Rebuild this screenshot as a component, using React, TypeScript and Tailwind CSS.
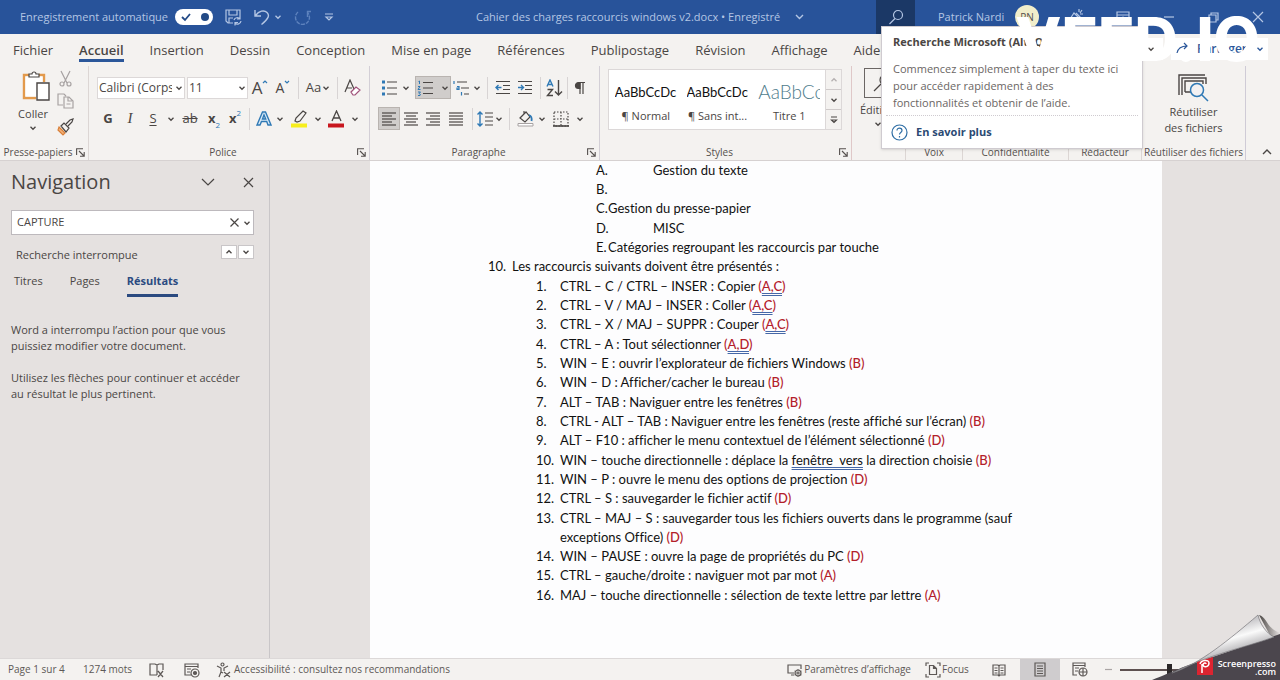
import React from "react";

type IconProps = { children: React.ReactNode; w?: number; h?: number; c?: string };

function Svg({ children, w = 16, h = 16, c = "" }: IconProps) {
  return (
    <svg width={w} height={h} viewBox={`0 0 ${w} ${h}`} fill="none" stroke="currentColor" strokeWidth="1.2" className={`shrink-0 ${c}`} aria-hidden="true">
      {children}
    </svg>
  );
}

function Chevron({ c = "" }: { c?: string }) {
  return (
    <Svg w={8} h={8} c={c}>
      <path d="M1.5 2.8 4 5.3 6.5 2.8" strokeWidth="1.3" />
    </Svg>
  );
}

function Tool({ label, w, children, on = false }: { label: string; w: string; children: React.ReactNode; on?: boolean }) {
  return (
    <button
      type="button"
      aria-label={label}
      className={`flex h-[23px] shrink-0 items-center justify-center ${w} ${on ? "border border-[#b9b4b0] bg-[#d0cdcb]" : ""}`}
    >
      {children}
    </button>
  );
}

function More({ label }: { label: string }) {
  return (
    <Tool label={label} w="w-3">
      <Chevron />
    </Tool>
  );
}

function Sep() {
  return <span className="mx-1 h-[22px] w-px shrink-0 bg-[#d8d4d4]" />;
}

function Launcher() {
  return (
    <button type="button" aria-label="Options du groupe" className="flex">
      <Svg w={9} h={9}>
        <path d="M.6 7V.8H7M3 3l5 5M8.2 4v4.2H4" strokeWidth="1.1" />
      </Svg>
    </button>
  );
}

function GroupLabel({ children, launcher = false }: { children: React.ReactNode; launcher?: boolean }) {
  return (
    <div className={`mt-auto flex h-4 items-center text-[10px] leading-4 text-[#55504e] ${launcher ? "-ml-2 pr-[3px]" : ""}`}>
      <span className="flex-1 text-center whitespace-nowrap">{children}</span>
      {launcher && <Launcher />}
    </div>
  );
}

function Lines({ rows }: { rows: [number, number][] }) {
  return (
    <Svg>
      {rows.map(([a, b], i) => (
        <path key={i} d={`M${a} ${2 + i * 3}H${b}`} />
      ))}
    </Svg>
  );
}

function TitleBar() {
  return (
    <header className="flex h-[34px] shrink-0 items-center bg-[#28539a] text-[11px] text-[#b4c6e4]">
      <div className="flex w-[476px] shrink-0 items-center pl-5">
        <label htmlFor="autosave" className="w-[155px] whitespace-nowrap">Enregistrement automatique</label>
        <span className="relative flex h-4 w-[38px] items-center justify-between rounded-full bg-white px-1 text-[#234a86]">
          <input id="autosave" type="checkbox" role="switch" defaultChecked className="absolute inset-0 opacity-0" />
          <Svg w={14} h={12}><path d="m3 6 3 3 5-6" strokeWidth="1.8" /></Svg>
          <span className="size-2 rounded-full bg-[#234a86]" />
        </span>
        <button type="button" aria-label="Enregistrer" className="ml-3">
          <Svg w={17} h={18}>
            <path d="M8 15H3L1 13V2h14v6M4 2v5h8V2M4 15v-5h4M9 12a3.5 3.5 0 0 1 6-1M15 8v3h-3M16 13a3.5 3.5 0 0 1-6 2M10 17.5v-3h3" />
          </Svg>
        </button>
        <button type="button" aria-label="Annuler" className="ml-3">
          <Svg w={16} h={18}><path d="M1 2v6h6M1.500 7.500C5 3 10 1.500 13 4.500s1.500 6-5.500 12" strokeWidth="1.4" /></Svg>
        </button>
        <Chevron c="ml-1" />
        <button type="button" aria-label="Rétablir" className="ml-3 text-[#5d82bd]">
          <Svg w={18} h={18}><path d="M4 4a7 7 0 1 0 9 0M13.500 9V3.500H18" strokeWidth="1.400" strokeDasharray="4 1" /></Svg>
        </button>
        <button type="button" aria-label="Personnaliser la barre" className="ml-3">
          <Svg w={10} h={10}><path d="M1 2h8M2 5l3 3 3-3z" /></Svg>
        </button>
      </div>
      <div className="flex w-[400px] shrink-0 items-center whitespace-nowrap">
        <button type="button" className="flex items-center">
          <span className="w-[318px] text-left">Cahier des charges raccourcis windows v2.docx • Enregistré</span>
          <Svg w={11} h={8}><path d="m2 2 3.500 3.500L9 2" strokeWidth="1.400" /></Svg>
        </button>
      </div>
      <button type="button" aria-label="Rechercher" className="flex h-[34px] w-[39px] shrink-0 items-center justify-center bg-[#1b3866]">
        <Svg><circle cx="10" cy="6" r="4.500" /><path d="M7 9.500 1.500 15" /></Svg>
      </button>
      <span className="ml-[23px] w-[77px] shrink-0 whitespace-nowrap">Patrick Nardi</span>
      <span className="flex size-6 shrink-0 items-center justify-center rounded-full bg-[#f1eecb] text-[10px] text-[#55504e]">PN</span>
      <div className="flex flex-1 items-center justify-between pr-4 pl-7">
        <button type="button" aria-label="Nouveautés"><Svg w={16} h={18}><path d="m1 14 6-9 5 5-9 5zM9 5l5 5M12 1v3M15 2l-2 3M16 6h-3" /></Svg></button>
        <button type="button" aria-label="Affichage du ruban"><Svg w={14} h={14}><path d="M1 2h12v10H1zM1 5h12M7 11V7M5 9l2-2 2 2" /></Svg></button>
        <button type="button" aria-label="Réduire"><Svg w={12} h={12}><path d="M1 6h10" /></Svg></button>
        <button type="button" aria-label="Restaurer"><Svg w={11} h={11}><path d="M1 3h7v7H1zM3 3V1h7v7H8" /></Svg></button>
        <button type="button" aria-label="Fermer"><Svg w={12} h={12}><path d="m1 1 10 10M11 1 1 11" /></Svg></button>
      </div>
    </header>
  );
}

const tabs = ["Fichier", "Accueil", "Insertion", "Dessin", "Conception", "Mise en page", "Références", "Publipostage", "Révision", "Affichage", "Aide"];

function Tabs() {
  return (
    <nav className="flex h-8 shrink-0 items-start gap-[26px] pl-[13px] text-[13px] leading-8">
      {tabs.map((t) => (
        <a key={t} href="#" className={`h-7 whitespace-nowrap ${t === "Accueil" ? "border-b-[3px] border-[#2b579a] font-semibold" : ""}`}>
          {t}
        </a>
      ))}
      <div className="mt-1 mr-3 ml-auto flex gap-2">
        <button type="button" aria-label="Commentaires" className="flex h-[22px] w-[30px] items-center justify-end bg-white pr-2"><Chevron /></button>
        <button type="button" className="flex h-[22px] w-[97px] items-center gap-[6px] bg-white px-1 text-xs font-semibold text-[#2b579a]">
          <Svg><path d="M2 12c1-5 5-7 10-7M9 2l3 3-3 3" /></Svg>
          <span className="flex-1 text-left">Partager</span>
          <Chevron />
        </button>
      </div>
    </nav>
  );
}

function Clipboard() {
  return (
    <section className="flex w-[89px] shrink-0 flex-col border-r border-[#dcd6d4] pl-2">
      <div className="flex pt-1 pl-[9px]">
        <button type="button" className="flex w-8 flex-col items-center text-[11px] leading-4">
          <Svg w={30} h={32} c="ml-2 mb-1">
            <path d="M7 5H2v23h12M22 12V5h-5" stroke="#e39a4c" strokeWidth="2.400" />
            <path d="M3.500 6.500h17V12H14v14.500H3.500z" fill="#fff" stroke="none" />
            <path d="M7 7V4h3a2 2 0 0 1 4 0h3v3z" fill="#fff" />
            <path d="M15 13h12v17H15z" fill="#fff" strokeWidth="1.400" />
          </Svg>
          Coller
          <Chevron c="mt-[2px]" />
        </button>
        <div className="ml-2 flex flex-col gap-1 text-[#a7a2a2]">
          <button type="button" aria-label="Couper">
            <Svg w={17} h={18}><path d="m4 1 6 12M13 1 7 13" /><circle cx="5" cy="14" r="2" /><circle cx="12" cy="14" r="2" /></Svg>
          </button>
          <button type="button" aria-label="Copier">
            <Svg w={17} h={18}><path d="M6 13H1V2h6l2 2M7 5h5l4 4v7H7zM11 5v4h4M9.500 12h4" /></Svg>
          </button>
          <button type="button" aria-label="Reproduire la mise en forme" className="mt-1 text-[#4a4644]">
            <Svg w={17} h={18}><path d="m2 9 6 6-2 2-5-5z" fill="#f3b27a" stroke="#d9803a" /><path d="m4 8 3-3 5 5-3 4zM9 6l4-4 3-1-1 3-4 4" /></Svg>
          </button>
        </div>
      </div>
      <GroupLabel launcher>Presse-papiers</GroupLabel>
    </section>
  );
}

function Picker({ label, value, w }: { label: string; value: string; w: string }) {
  return (
    <div className={`relative flex h-[22px] shrink-0 items-center border border-[#dcd8d8] bg-white ${w}`}>
      <select aria-label={label} className="w-full appearance-none overflow-hidden pr-3 pl-px text-xs leading-5 text-clip outline-none">
        <option>{value}</option>
      </select>
      <Chevron c="pointer-events-none absolute right-px" />
    </div>
  );
}

function FontGroup() {
  return (
    <section className="flex w-[281px] shrink-0 flex-col border-r border-[#d3cfd6] pl-2">
      <div className="mt-[10px] flex h-[23px] items-center">
        <Picker label="Police" value="Calibri (Corps)" w="w-[88px]" />
        <span className="w-[2px]" />
        <Picker label="Taille" value="11" w="w-[61px]" />
        <Tool label="Agrandir la police" w="w-6">
          <span className="text-[17px] leading-5">A</span><Svg w={6} h={6} c="mb-3 text-[#2f79b5]"><path d="m1 4 2-2 2 2" /></Svg>
        </Tool>
        <Tool label="Réduire la police" w="w-[22px]">
          <span className="text-sm leading-5">A</span><Svg w={6} h={6} c="mb-3 text-[#2f79b5]"><path d="m1 2 2 2 2-2" /></Svg>
        </Tool>
        <Sep />
        <Tool label="Modifier la casse" w="w-[30px]"><span className="text-[13px]">Aa</span><Chevron c="ml-px" /></Tool>
        <Sep />
        <Tool label="Effacer la mise en forme" w="w-5">
          <Svg w={17} h={18}><path d="m1 13 5-12 4 9M3 9h5" /><path d="m7 13 5-5 4 3-5 5H9z" stroke="#a0527a" fill="#fff" /></Svg>
        </Tool>
      </div>
      <div className="mt-2 flex h-[23px] items-center text-[13px]">
        <Tool label="Gras" w="w-[22px]"><b>G</b></Tool>
        <Tool label="Italique" w="w-[22px]"><i className="font-['Liberation_Serif',serif] text-[15px]">I</i></Tool>
        <Tool label="Souligné" w="w-6"><u className="underline-offset-2">S</u></Tool>
        <More label="Types de soulignement" />
        <Tool label="Barré" w="w-[26px]"><s>ab</s></Tool>
        <Tool label="Indice" w="w-[22px]"><b>x</b><span className="mt-3 text-[8px] text-[#2f79b5]">2</span></Tool>
        <Tool label="Exposant" w="w-5"><b>x</b><span className="mb-3 text-[8px] text-[#2f79b5]">2</span></Tool>
        <Sep />
        <Tool label="Effets de texte" w="w-5">
          <Svg w={16} h={16}><path d="M1 14 6.500 1h3L15 14h-3l-1.300-3.500H5.500L4 14zM6.500 8h3.200L8 4z" stroke="#2f79b5" fill="#dcecf8" strokeWidth="1.400" /></Svg>
        </Tool>
        <More label="Autres effets" />
        <Tool label="Surlignage" w="w-[26px]">
          <Svg w={17} h={18}><path d="M4 11 5 8l7-7 3 2-6 8-3 1z" /><path d="M0 15.500h16" stroke="#f7ee1c" strokeWidth="4" /></Svg>
        </Tool>
        <More label="Couleurs de surlignage" />
        <Tool label="Couleur de police" w="w-[25px]">
          <Svg w={17} h={18}><path d="M4 11 8.500 1 13 11M5.500 8h6" strokeWidth="1.300" /><path d="M0 15.500h16" stroke="#c8171e" strokeWidth="4" /></Svg>
        </Tool>
        <More label="Couleurs de police" />
      </div>
      <GroupLabel launcher>Police</GroupLabel>
    </section>
  );
}

function ParagraphGroup() {
  return (
    <section className="flex w-[230px] shrink-0 flex-col border-r border-[#d3cfd6] pl-2">
      <div className="mt-[10px] flex h-[23px] items-center">
        <Tool label="Puces" w="w-[22px]">
          <Svg><path d="M6 2h10M6 8h10M6 14h10" /><path d="M1 2h3M1 8h3M1 14h3" stroke="#2f79b5" strokeWidth="3" /></Svg>
        </Tool>
        <More label="Types de puces" />
        <span className="w-[3px]" />
        <Tool label="Numérotation" w="w-9" on>
          <Svg><path d="M6 2.500h10M6 8h10M6 13.500h10" /><path d="M1.500 1.500 2.500 1v3M1 6.500h2L1 9.500h2.500M1 12h2.500L2 13.500l1.500 1-.5 1H1" stroke="#2f79b5" strokeWidth="1" /></Svg>
          <Chevron c="ml-2" />
        </Tool>
        <Tool label="Liste à plusieurs niveaux" w="w-5">
          <Svg><path d="M4 2h10M8 8h8M11 14h5" /><path d="M1 1v3M4 6.500h2v3H4v-1.500h2M8.500 12v3.500" stroke="#2f79b5" /></Svg>
        </Tool>
        <More label="Listes" />
        <Sep />
        <Tool label="Diminuer le retrait" w="w-[22px]">
          <Svg><path d="M1 1.500h14M8 5.500h7M8 9.500h7M1 13.500h14" /><path d="M6.500 7.500H1M3.500 5 1 7.500 3.500 10" stroke="#2f79b5" strokeWidth="1.400" /></Svg>
        </Tool>
        <Tool label="Augmenter le retrait" w="w-[22px]">
          <Svg><path d="M1 1.500h14M8 5.500h7M8 9.500h7M1 13.500h14" /><path d="M1 7.500h5.500M4 5l2.500 2.500L4 10" stroke="#2f79b5" strokeWidth="1.400" /></Svg>
        </Tool>
        <Sep />
        <Tool label="Trier" w="w-[18px]">
          <Svg w={17} h={18}><path d="M1 7.500 4 1l3 6.500M2 5.500h4" stroke="#2f79b5" strokeWidth="1.400" /><path d="M1.500 10.500h5l-5 6h5.500M12.500 1v15M9 12.500l3.500 3.500 3.500-3.500" strokeWidth="1.400" /></Svg>
        </Tool>
        <Sep />
        <Tool label="Afficher tout" w="w-4">
          <Svg w={12} h={14}><path d="M6 1.500V13M9 1.500V13M11 1.500H5" /><path d="M6 1.500H4.500a3 3 0 0 0 0 6H6z" fill="currentColor" /></Svg>
        </Tool>
      </div>
      <div className="mt-2 flex h-[23px] items-center">
        <Tool label="Aligner à gauche" w="w-[22px]" on><Lines rows={[[1, 15], [1, 11], [1, 15], [1, 11], [1, 15]]} /></Tool>
        <Tool label="Centrer" w="w-[22px]"><Lines rows={[[1, 15], [3, 13], [1, 15], [3, 13], [1, 15]]} /></Tool>
        <Tool label="Aligner à droite" w="w-[22px]"><Lines rows={[[1, 15], [5, 15], [1, 15], [5, 15], [1, 15]]} /></Tool>
        <Tool label="Justifier" w="w-6"><Lines rows={[[1, 15], [1, 15], [1, 15], [1, 15], [1, 15]]} /></Tool>
        <Sep />
        <Tool label="Interligne" w="w-4">
          <Svg><path d="M8 2h8M8 6h8M8 10h8M8 14h8" /><path d="M3 1v14M.5 3.500 3 1l2.500 2.500M.5 12.500 3 15l2.500-2.500" stroke="#2f79b5" strokeWidth="1.400" /></Svg>
        </Tool>
        <More label="Options d'interligne" />
        <Sep />
        <Tool label="Trame de fond" w="w-[22px]">
          <Svg w={17} h={17}><path d="M3 8 9 2l4 5-5 5zM7 4V1" /><path d="M12 5c3 1 3 3 2.500 6" stroke="#2f79b5" strokeWidth="1.800" /><path d="M1 13.500h15v2.500H1z" fill="#fff" stroke="#a7a2a2" strokeWidth="1" /></Svg>
        </Tool>
        <More label="Couleurs de trame" />
        <Tool label="Bordures" w="w-[26px]">
          <Svg><path d="M1 1h14v14H1zM8 1v14M1 8h14" strokeDasharray="1.500 1.500" /><path d="M0 15h16" strokeWidth="1.600" /></Svg>
        </Tool>
        <More label="Types de bordures" />
      </div>
      <GroupLabel launcher>Paragraphe</GroupLabel>
    </section>
  );
}

const styles = [
  { name: "¶ Normal", sample: "AaBbCcDc", c: "text-[13px] text-[#111]" },
  { name: "¶ Sans int...", sample: "AaBbCcDc", c: "text-[13px] text-[#111]" },
  { name: "Titre 1", sample: "AaBbCc", c: "text-[19px] font-light text-[#4f7c8c]" },
];

function StylesGroup() {
  return (
    <section className="flex w-[252px] shrink-0 flex-col border-r border-[#dfc8c8] pl-2">
      <div className="mt-[3px] flex h-[61px]">
        <div className="flex w-[218px] border border-[#dcd8d8] bg-white pl-px">
          {styles.map((s) => (
            <button key={s.name} type="button" className="flex w-[72px] flex-col items-center overflow-hidden pt-2">
              <span className={`h-7 w-[62px] overflow-hidden text-left font-[Lato,sans-serif] leading-7 whitespace-nowrap ${s.c}`}>{s.sample}</span>
              <span className="mt-[2px] text-[11px] leading-4 whitespace-nowrap">{s.name}</span>
            </button>
          ))}
        </div>
        <div className="flex w-4 flex-col border-y border-r border-[#dcd8d8]">
          <button type="button" aria-label="Styles précédents" className="flex flex-1 items-center justify-center text-[#b5b0b0]"><Chevron c="rotate-180" /></button>
          <button type="button" aria-label="Styles suivants" className="flex flex-1 items-center justify-center border-y border-[#cfcaca]"><Chevron /></button>
          <button type="button" aria-label="Tous les styles" className="flex flex-1 items-center justify-center">
            <Svg w={8} h={8}><path d="M1 1h6M1.500 4 4 6.500 6.500 4z" /></Svg>
          </button>
        </div>
      </div>
      <GroupLabel launcher>Styles</GroupLabel>
    </section>
  );
}

function SideLabel({ name, w }: { name: string; w: string }) {
  return (
    <section className={`flex shrink-0 flex-col border-r border-[#dcd6d4] ${w}`}>
      <GroupLabel>{name}</GroupLabel>
    </section>
  );
}

function Ribbon() {
  return (
    <div className="flex h-[95px] shrink-0 border-b border-[#d6d1d1]">
      <Clipboard />
      <FontGroup />
      <ParagraphGroup />
      <StylesGroup />
      <section className="flex w-[54px] shrink-0 flex-col border-r border-[#dcd6d4] pt-[2px] pl-2">
        <button type="button" className="flex flex-col items-start text-[11px] leading-4">
          <span className="ml-1 flex h-[30px] w-8 items-center border border-[#6b6664] pl-2">
            <Svg w={20} h={20}><circle cx="12" cy="7" r="5" /><path d="m8 11-7 7" /></Svg>
          </span>
          <span className="mt-1">Édition</span>
          <Chevron c="ml-[14px] mt-[2px]" />
        </button>
      </section>
      <SideLabel name="Voix" w="w-[57px]" />
      <SideLabel name="Confidentialité" w="w-[106px]" />
      <SideLabel name="Rédacteur" w="w-[73px]" />
      <section className="flex w-[104px] shrink-0 flex-col border-r border-[#cfcbd6]">
        <button type="button" className="mx-auto flex flex-col items-center pt-[7px] text-[11px] leading-4">
          <Svg w={32} h={29} c="mb-[2px]">
            <path d="M2 22V2h26M5 22V5h24v6M8 19V8h18v3M8 19h7" strokeWidth="1.400" />
            <circle cx="20" cy="17" r="6.500" stroke="#2f79b5" fill="#f3f1f2" strokeWidth="1.500" /><path d="m25 22 6 6" stroke="#2f79b5" strokeWidth="1.500" />
          </Svg>
          <span>Réutiliser</span>
          <span>des fichiers</span>
        </button>
        <GroupLabel>Réutiliser des fichiers</GroupLabel>
      </section>
      <button type="button" aria-label="Réduire le ruban" className="mt-auto mb-1 ml-4 h-2">
        <Svg w={10} h={8}><path d="m1 6 4-4 4 4" strokeWidth="1.400" /></Svg>
      </button>
    </div>
  );
}

function SearchTip() {
  return (
    <div role="tooltip" className="absolute top-[26px] left-[881px] w-[262px] border border-[#cfcbd0] bg-white px-1 text-[11px] text-[#6b6664] shadow">
      <p className="px-[7px] pt-[6px] leading-[18px] font-bold text-[#4a4644]">Recherche Microsoft (Alt+Q)</p>
      <p className="mt-[9px] border-b border-dotted border-[#cfcbd0] px-[7px] pb-1 leading-[17px]">
        Commencez simplement à taper du texte ici pour accéder rapidement à des fonctionnalités et obtenir de l’aide.
      </p>
      <a href="#" className="flex h-8 items-center gap-2 px-[5px] font-bold text-[#2b4a73]">
        <Svg w={17} h={17} c="text-[#2f6ea5]"><circle cx="8.500" cy="8.500" r="7.500" /><path d="M6 6.500C6 3 11 3.500 11 6.500c0 2-2.500 2-2.500 4M8.500 12v1.500" /></Svg>
        En savoir plus
      </a>
    </div>
  );
}

function Navigation() {
  return (
    <aside className="flex w-[270px] shrink-0 flex-col border-r border-[#c9c6c8] pt-[5px] pr-[15px] pl-[11px] text-[11px]">
      <div className="flex h-8 items-center">
        <h2 className="flex-1 text-xl">Navigation</h2>
        <button type="button" aria-label="Options du volet" className="mr-7"><Svg w={14} h={10}><path d="m1 2 6 6 6-6" /></Svg></button>
        <button type="button" aria-label="Fermer le volet"><Svg w={11} h={11}><path d="m1 1 9 9M10 1l-9 9" /></Svg></button>
      </div>
      <div className="mt-3 flex h-[25px] items-center border border-[#bdb9bd] bg-white pr-[2px]">
        <input aria-label="Rechercher un document" defaultValue="CAPTURE" className="min-w-0 flex-1 px-[5px] outline-none" />
        <button type="button" aria-label="Effacer"><Svg w={9} h={9}><path d="m.5.5 8 8M8.500.5l-8 8" /></Svg></button>
        <Chevron c="ml-1" />
      </div>
      <div className="mt-[10px] flex h-5 items-start pl-[5px]">
        <span className="flex-1 leading-5">Recherche interrompue</span>
        <button type="button" aria-label="Résultat précédent" className="flex h-[14px] w-4 items-center justify-center border border-[#c9c6c8] bg-white"><Chevron c="rotate-180" /></button>
        <button type="button" aria-label="Résultat suivant" className="ml-px flex h-[14px] w-4 items-center justify-center border border-[#c9c6c8] bg-white"><Chevron /></button>
      </div>
      <div className="mt-2 flex gap-[27px] pl-[3px] leading-4">
        <a href="#" className="h-6">Titres</a>
        <a href="#" className="h-6">Pages</a>
        <a href="#" className="h-6 border-b-[3px] border-[#2b4a80] font-bold text-[#2b4a80]">Résultats</a>
      </div>
      <p className="mt-[25px] w-[236px] leading-4">Word a interrompu l’action pour que vous puissiez modifier votre document.</p>
      <p className="mt-4 w-[240px] leading-4">Utilisez les flèches pour continuer et accéder au résultat le plus pertinent.</p>
    </aside>
  );
}

const sections: [string, string, boolean][] = [
  ["A.", "Gestion du texte", true],
  ["B.", "", true],
  ["C.", "Gestion du presse-papier", false],
  ["D.", "MISC", true],
  ["E.", "Catégories regroupant les raccourcis par touche", false],
];

const shortcuts: [React.ReactNode, string][] = [
  ["CTRL – C / CTRL – INSER : Copier", "A,C"],
  ["CTRL – V / MAJ – INSER : Coller", "A,C"],
  ["CTRL – X / MAJ – SUPPR : Couper", "A,C"],
  ["CTRL – A : Tout sélectionner", "A,D"],
  ["WIN – E : ouvrir l’explorateur de fichiers Windows", "B"],
  ["WIN – D : Afficher/cacher le bureau", "B"],
  ["ALT – TAB : Naviguer entre les fenêtres", "B"],
  ["CTRL - ALT – TAB : Naviguer entre les fenêtres (reste affiché sur l’écran)", "B"],
  ["ALT – F10 : afficher le menu contextuel de l’élément sélectionné", "D"],
  [<>WIN – touche directionnelle : déplace la <span className="underline decoration-[#4668a8] decoration-double underline-offset-2">fenêtre&nbsp; vers</span> la direction choisie</>, "B"],
  ["WIN – P : ouvre le menu des options de projection", "D"],
  ["CTRL – S : sauvegarder le fichier actif", "D"],
  ["CTRL – MAJ – S : sauvegarder tous les fichiers ouverts dans le programme (sauf exceptions Office)", "D"],
  ["WIN – PAUSE : ouvre la page de propriétés du PC", "D"],
  ["CTRL – gauche/droite : naviguer mot par mot", "A"],
  ["MAJ – touche directionnelle : sélection de texte lettre par lettre", "A"],
];

function Document() {
  return (
    <article className="mr-[118px] ml-[100px] flex-1 bg-[#fdfdfe] pr-[112px] font-[Lato,'Open_Sans',sans-serif] text-[13px] leading-[19px] text-[#111] [font-variant-ligatures:none]">
      <ol className="pl-[226px] [&>li:nth-child(3n)]:mb-px">
        {sections.map(([k, t, wide]) => (
          <li key={k} className="flex h-[19px] whitespace-nowrap">
            <span className={wide ? "w-[57px]" : "w-3"}>{k}</span>
            <span>{t}</span>
          </li>
        ))}
      </ol>
      <p className="mb-px flex pl-[118px]"><span className="w-6">10.</span>Les raccourcis suivants doivent être présentés :</p>
      <ol className="pl-[166px] [&>li:nth-child(3n)]:mb-px">
        {shortcuts.map(([t, k], i) => (
          <li key={i} className="flex">
            <span className="w-6 shrink-0">{i + 1}.</span>
            <span>
              {t}{" "}
              <span className="font-medium text-[#b3202a]">
                (<span className={k.length > 1 ? "underline decoration-[#4668a8] decoration-double underline-offset-2" : ""}>{k}</span>)
              </span>
            </span>
          </li>
        ))}
      </ol>
    </article>
  );
}

function StatusBar() {
  return (
    <footer className="flex h-[22px] shrink-0 items-center border-t border-[#dcd8d8] pl-2 text-[10px] text-[#5d5856]">
      <span className="w-[75px] whitespace-nowrap">Page 1 sur 4</span>
      <span className="w-[66px] whitespace-nowrap">1274 mots</span>
      <button type="button" aria-label="Vérification"><Svg w={16} h={16}><path d="M8 13H1V2h5l2 1 2-1h4v6M8 3v10M9 9l5 6M14 9l-5 6" /></Svg></button>
      <button type="button" aria-label="Macro" className="ml-[19px]"><Svg w={16} h={16}><path d="M7 13H1V2h13v4M1 4.500h13M3 7h4M3 10h3" /><circle cx="11" cy="11" r="4" /><circle cx="11" cy="11" r="1.500" fill="currentColor" /></Svg></button>
      <button type="button" className="ml-4 flex items-center gap-[3px] whitespace-nowrap">
        <Svg w={15} h={16}><circle cx="6.500" cy="2.500" r="1.500" /><path d="m1 4 4 2v4l-2 5M12 4 8 6v3M5 10l2 1M8 10l6 5M14 10l-6 5" /></Svg>
        Accessibilité : consultez nos recommandations
      </button>
      <div className="ml-auto flex h-full items-center pr-[62px]">
        <button type="button" className="flex items-center gap-px whitespace-nowrap">
          <Svg w={16} h={16}><path d="M7 11H1V3h13v4M4 13h3" /><circle cx="11" cy="11" r="3" /><path d="M11 7v8M7.500 9l7 4M14.500 9l-7 4" strokeWidth=".8" /></Svg>
          Paramètres d’affichage
        </button>
        <button type="button" className="ml-[14px] flex w-[58px] items-center gap-px whitespace-nowrap">
          <Svg w={16} h={16}><path d="M1 4V1h3M12 1h3v3M1 12v3h3M12 15h3v-3M4.500 3.500h4l3 3v6h-7zM8.500 3.500v3h3" /></Svg>
          Focus
        </button>
        <button type="button" aria-label="Mode Lecture" className="flex w-8 justify-center"><Svg w={14} h={14}><path d="M1 2h5l1 1 1-1h5v10H8l-1 1-1-1H1zM7 3v10M2.500 5h3M2.500 7.500h3M2.500 10h3M8.500 5h3M8.500 7.500h3M8.500 10h3" /></Svg></button>
        <button type="button" aria-label="Page" className="ml-[5px] flex h-full w-10 items-center justify-center bg-[#cfccce]"><Svg w={12} h={15}><path d="M1 1h10v13H1zM3 4h6M3 6.500h6M3 9h6M3 11.500h6" /></Svg></button>
        <button type="button" aria-label="Mode Web" className="flex w-10 justify-center"><Svg w={16} h={15}><path d="M5 13H1V1h12v4M1 3.500h12M3 6h4M3 9h3" /><circle cx="11" cy="10" r="4" /><path d="M7 10h8M11 6v8" /></Svg></button>
        <button type="button" aria-label="Zoom arrière" className="mr-[7px] ml-1"><Svg w={9} h={9} c="text-[#aaa5a5]"><path d="M1 4.500h7" /></Svg></button>
        <input
          type="range"
          aria-label="Zoom"
          defaultValue={50}
          className="h-3 w-[98px] appearance-none bg-[linear-gradient(#5d5050,#5d5050)] bg-[length:100%_2px] bg-center bg-no-repeat [&::-webkit-slider-thumb]:h-3 [&::-webkit-slider-thumb]:w-[5px] [&::-webkit-slider-thumb]:appearance-none [&::-webkit-slider-thumb]:bg-[#2b2728]"
        />
      </div>
    </footer>
  );
}

function PageCurl() {
  return (
    <div className="absolute right-0 bottom-0 h-[66px] w-[128px] text-white">
      <svg width="128" height="66" viewBox="0 0 128 66" className="absolute inset-0" aria-hidden="true">
        <defs>
          <linearGradient id="curl" x1=".45" y1=".25" x2=".7" y2=".75">
            <stop offset="0" stopColor="#c9c8cb" />
            <stop offset=".35" stopColor="#fafafa" />
            <stop offset="1" stopColor="#8b898e" />
          </linearGradient>
          <linearGradient id="shade" x1="0" y1="0" x2="1" y2="0">
            <stop offset="0" stopColor="#4a4644" />
            <stop offset="1" stopColor="#4a4644" stopOpacity="0" />
          </linearGradient>
        </defs>
        <path d="M107 1c8 2 8 14 21 18v6h-8z" fill="url(#shade)" />
        <path d="M0 66C20 58 28 54 40 50L128 20v46z" fill="#4b464d" />
        <path d="M20 59C48 50 78 25 106 1c2 9 8 18 16 22C92 34 58 40 20 59z" fill="url(#curl)" stroke="#77757a" strokeWidth=".7" />
        <path d="M45 48 61 43v18H45z" fill="#dc2430" />
        <path d="M50 59v-9M48 50c1-4 9-5 9-1 0 4-5 5-6 2 0-2 3-3 3-1" fill="none" stroke="#fff" strokeWidth="1.500" />
      </svg>
      <p className="relative pt-[46px] pr-1 text-right text-[9px] leading-[8px] font-semibold">
        Screenpresso<br />.com
      </p>
    </div>
  );
}

export default function App() {
  return (
    <div className="relative flex min-h-screen flex-col overflow-hidden bg-[#f4f2f0] font-['Open_Sans','Noto_Sans',sans-serif] text-[#4a4644]">
      <TitleBar />
      <Tabs />
      <Ribbon />
      <main className="flex flex-1 bg-[#e5e1e0]">
        <Navigation />
        <Document />
      </main>
      <StatusBar />
      <SearchTip />
      <p className="pointer-events-none absolute top-0 right-5 font-[Inter,sans-serif] text-[60px] leading-[78px] font-extrabold text-white">VEED.IO</p>
      <PageCurl />
    </div>
  );
}
